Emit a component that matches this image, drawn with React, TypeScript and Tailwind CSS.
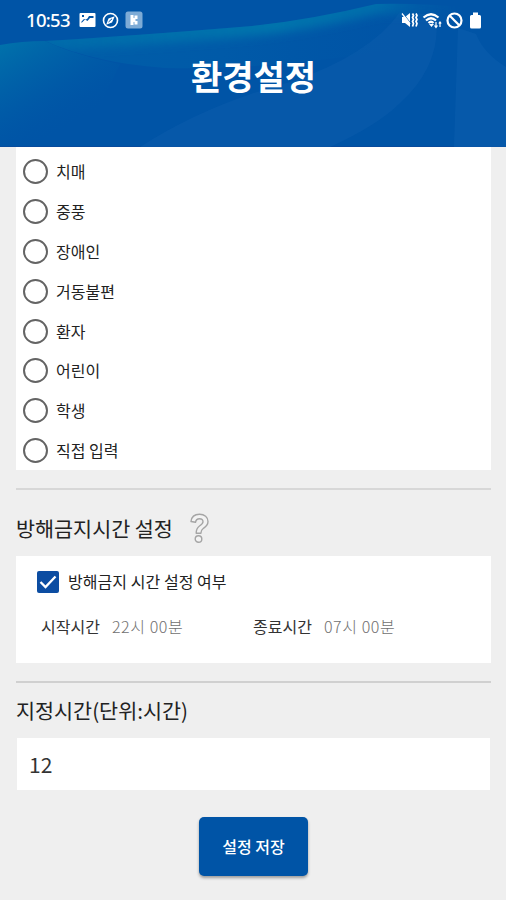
const OPTIONS = ['치매', '중풍', '장애인', '거동불편', '환자', '어린이', '학생', '직접 입력'];

function HeaderWaves() {
  return (
    <svg className="absolute inset-0" width="506" height="147" viewBox="0 0 506 147" aria-hidden="true">
      <defs>
        <linearGradient id="left" gradientUnits="userSpaceOnUse" x1="0" y1="42" x2="55" y2="135">
          <stop offset="0" stopColor="#0078ac" stopOpacity="0.85" />
          <stop offset="0.5" stopColor="#0066a9" stopOpacity="0.5" />
          <stop offset="1" stopColor="#0056a6" stopOpacity="0" />
        </linearGradient>
        <linearGradient id="body" gradientUnits="userSpaceOnUse" x1="45" y1="0" x2="400" y2="0">
          <stop offset="0" stopColor="#0068aa" stopOpacity="0.5" />
          <stop offset="0.5" stopColor="#0060aa" stopOpacity="0.5" />
          <stop offset="1" stopColor="#005ba9" stopOpacity="0" />
        </linearGradient>
        <linearGradient id="glow" gradientUnits="userSpaceOnUse" x1="45" y1="0" x2="460" y2="0">
          <stop offset="0" stopColor="#0078ad" stopOpacity="0.5" />
          <stop offset="0.55" stopColor="#007aae" stopOpacity="0.85" />
          <stop offset="0.8" stopColor="#0074ad" stopOpacity="0.8" />
          <stop offset="1" stopColor="#005ba8" stopOpacity="0" />
        </linearGradient>
        <filter id="soft" filterUnits="userSpaceOnUse" x="0" y="-30" width="506" height="140">
          <feGaussianBlur stdDeviation="5" />
        </filter>
        <clipPath id="crest">
          <path d="M45 41Q130 36 252 26Q310 20 376 4Q420 3 460 7L440 40Q350 60 252 66Q210 69 165 68Q95 63 45 41Z" />
        </clipPath>
      </defs>
      <path d="M140 147Q205 105 290 82Q370 55 400 12L436 15Q442 65 400 103Q378 125 330 147Z" fill="#0a5cab" opacity="0.6" />
      <path d="M0 45Q22 41 45 41Q75 55 120 64L80 147H0Z" fill="url(#left)" />
      <g clipPath="url(#crest)">
        <rect x="45" y="0" width="415" height="70" fill="url(#body)" />
        <path d="M45 42Q130 37 252 27Q310 21 376 5Q420 4 460 8" fill="none" stroke="url(#glow)" strokeWidth="18" filter="url(#soft)" />
      </g>
      <path d="M458 28L476 34Q484 54 506 67V147H454Z" fill="#0a5dad" opacity="0.6" />
    </svg>
  );
}

function StatusBar() {
  return (
    <div className="relative flex h-10 items-center pl-[26px] pr-[23px] text-white">
      <span className="w-[45px] whitespace-nowrap font-['Noto_Sans',sans-serif] text-[18.5px] font-medium leading-none tracking-[-0.7px]">
        10:53
      </span>
      <svg className="ml-2 shrink-0" width="17" height="16" viewBox="0 0 17 16">
        <rect x="0.5" y="1" width="16" height="14" rx="1" fill="#fff" />
        <path d="M2.5 11L6 7.500l2.500 1.500L11 6h3.500V4H10L8.500 6.500 7 7.500 5 7l-2.500 2.500Z" fill="#0053a6" />
        <path d="M3 3h2v2H3z" fill="#0053a6" />
      </svg>
      <svg className="ml-1.5 shrink-0" width="17" height="17" viewBox="0 0 17 17" fill="none">
        <circle cx="8.5" cy="8.5" r="7" stroke="#fff" strokeWidth="1.6" />
        <path d="M12.800 4.200L10 10.500 4.200 12.800 6.500 6.500Z" fill="#fff" />
        <path d="M6.500 10l3.500-3.200" stroke="#0053a6" strokeWidth="1" />
      </svg>
      <svg className="ml-1.5 shrink-0" width="18" height="18" viewBox="0 0 18 18">
        <rect x="0.5" y="0.5" width="17" height="17" rx="2.5" fill="#7dabd6" />
        <path d="M5.500 4h3v3h1V4.500h3V8h-2v2h2v3.500h-3V11h-1v3h-3Z" fill="#fff" />
      </svg>

      <svg className="ml-auto shrink-0" width="17" height="16" viewBox="0 0 17 16" fill="none">
        <path d="M1 5h3l5-4v14l-5-4H1Z" fill="#fff" />
        <path d="M2 1l9 12" stroke="#0056a8" strokeWidth="0.800" />
        <path d="M1 1.500l8 10.500" stroke="#fff" strokeWidth="1.300" />
        <path d="M11.5 1.5l1 2-1 2 1 2-1 2 1 2-1 3M15 1.5l1 2-1 2 1 2-1 2 1 2-1 3" stroke="#fff" strokeWidth="1.700" />
      </svg>
      <svg className="ml-1 shrink-0" width="20" height="17" viewBox="0 0 20 17" fill="none" stroke="#fff">
        <path d="M1.5 5.5q7.500-6.500 15 0M4 8.500q5-4.500 10 0M6.500 11q2.500-2.500 5 0" strokeWidth="2.200" />
        <path d="M7 12l2.500 3L12 12Z" fill="#fff" stroke="none" />
        <path d="M14 10v5M12.500 13.500l1.500 2 1.500-2M18 15v-5M16.800 11.500l1.200-1.500 1.200 1.500" strokeWidth="1.200" />
      </svg>
      <svg className="ml-1 shrink-0" width="17" height="17" viewBox="0 0 17 17" fill="none" stroke="#fff" strokeWidth="2.200">
        <circle cx="8.5" cy="8.5" r="7" />
        <path d="M3.800 3.800l9.400 9.400" />
      </svg>
      <svg className="ml-[6px] mr-px shrink-0" width="13" height="17" viewBox="0 0 13 17">
        <path d="M4 0.500h5V3h1.500A1.500 1.500 0 0 1 12 4.500V15a1.500 1.500 0 0 1-1.500 1.500h-8A1.500 1.500 0 0 1 1 15V4.500A1.500 1.500 0 0 1 2.500 3H4Z" fill="#fff" />
      </svg>
    </div>
  );
}

function TimeField({ label, value }: { label: string; value: string }) {
  return (
    <div className="flex w-[212px] gap-3 whitespace-nowrap text-[16px] leading-6">
      <span className="text-[#333]">{label}</span>
      <span className="font-light tracking-[0.6px] text-[#707070]">{value}</span>
    </div>
  );
}

export default function App() {
  return (
    <div className="flex h-[900px] w-[506px] flex-col overflow-hidden bg-[#efefef] font-['Noto_Sans_CJK_KR',sans-serif] text-[#222]">
      <header className="relative h-[147px] shrink-0 border-b border-[#084a9c] bg-[#0054a6]">
        <HeaderWaves />
        <StatusBar />
        <h1 className="relative mt-[13px] pl-px text-center text-[34px] font-bold leading-[46px] text-white">환경설정</h1>
      </header>

      <main className="flex flex-1 flex-col px-4">
        <ul className="h-[323px] w-[475px] bg-white pl-[7px] pt-[5px]">
          {OPTIONS.map((option) => (
            <li key={option} className="flex h-[39.8px] items-center gap-2">
              <span className="size-[25px] shrink-0 rounded-full border-2 border-[#646464]" />
              <span className="pb-px text-[16px] leading-6">{option}</span>
            </li>
          ))}
        </ul>

        <hr className="mt-[18px] h-0.5 w-[475px] border-0 bg-[#d7d7d7]" />

        <div className="mt-[18px] flex h-10 items-center gap-[17px]">
          <h2 className="whitespace-nowrap text-[20.7px] leading-8">방해금지시간 설정</h2>
          <svg width="19" height="31" viewBox="0 0 19 31" fill="none">
            <path d="M1 8.500C1.500 3.500 5 1.200 9.500 1.200C14.500 1.200 18 4.200 18 8.500C18 12.500 15.500 14 13.200 15.500C11.200 16.800 10.900 17.800 10.900 20.300H6.200C6.200 16.500 6.800 14.800 9.500 13C11.800 11.500 13 10.700 13 8.800C13 6.800 11.500 5.700 9.500 5.700C7 5.700 5.900 7 5.500 9.300Z" fill="#f3f3f3" stroke="#a5a5a5" strokeWidth="1.400" strokeLinejoin="round" />
            <circle cx="8.500" cy="26" r="3.300" fill="#f3f3f3" stroke="#a5a5a5" strokeWidth="1.400" />
          </svg>
        </div>

        <section className="mt-2 h-[107px] w-[475px] bg-white pt-3.5">
          <label className="flex h-6 items-center pl-[21px]">
            <span className="flex size-[22px] items-center justify-center rounded-[2px] bg-[#0c4da2]">
              <svg width="20" height="18" viewBox="0 0 20 18" fill="none">
                <path d="M2.500 9l5 5L17.500 3.500" stroke="#fff" strokeWidth="2.300" />
              </svg>
            </span>
            <span className="ml-[9px] pb-0.5 text-[16px] leading-6 tracking-[0.05px]">방해금지 시간 설정 여부</span>
          </label>
          <div className="mt-5 flex pl-[25px]">
            <TimeField label="시작시간" value="22시 00분" />
            <TimeField label="종료시간" value="07시 00분" />
          </div>
        </section>

        <hr className="mt-[18px] h-0.5 w-[475px] border-0 bg-[#d0d0d0]" />

        <h2 className="mt-[11px] whitespace-nowrap text-[20.700px] leading-8">지정시간(단위:시간)</h2>
        <div className="ml-px mt-3 flex h-[52px] w-[473px] items-center bg-white pl-3 text-[21px] text-[#333]">
          <span className="mt-0.5">12</span>
        </div>

        <button className="ml-[183px] mt-[27px] h-[59px] w-[109px] rounded-[5px] bg-[#0054a6] pb-0.5 text-[16px] font-medium text-white shadow-[0_2px_3px_rgba(0,0,0,0.35)]">
          설정 저장
        </button>
      </main>
    </div>
  );
}
